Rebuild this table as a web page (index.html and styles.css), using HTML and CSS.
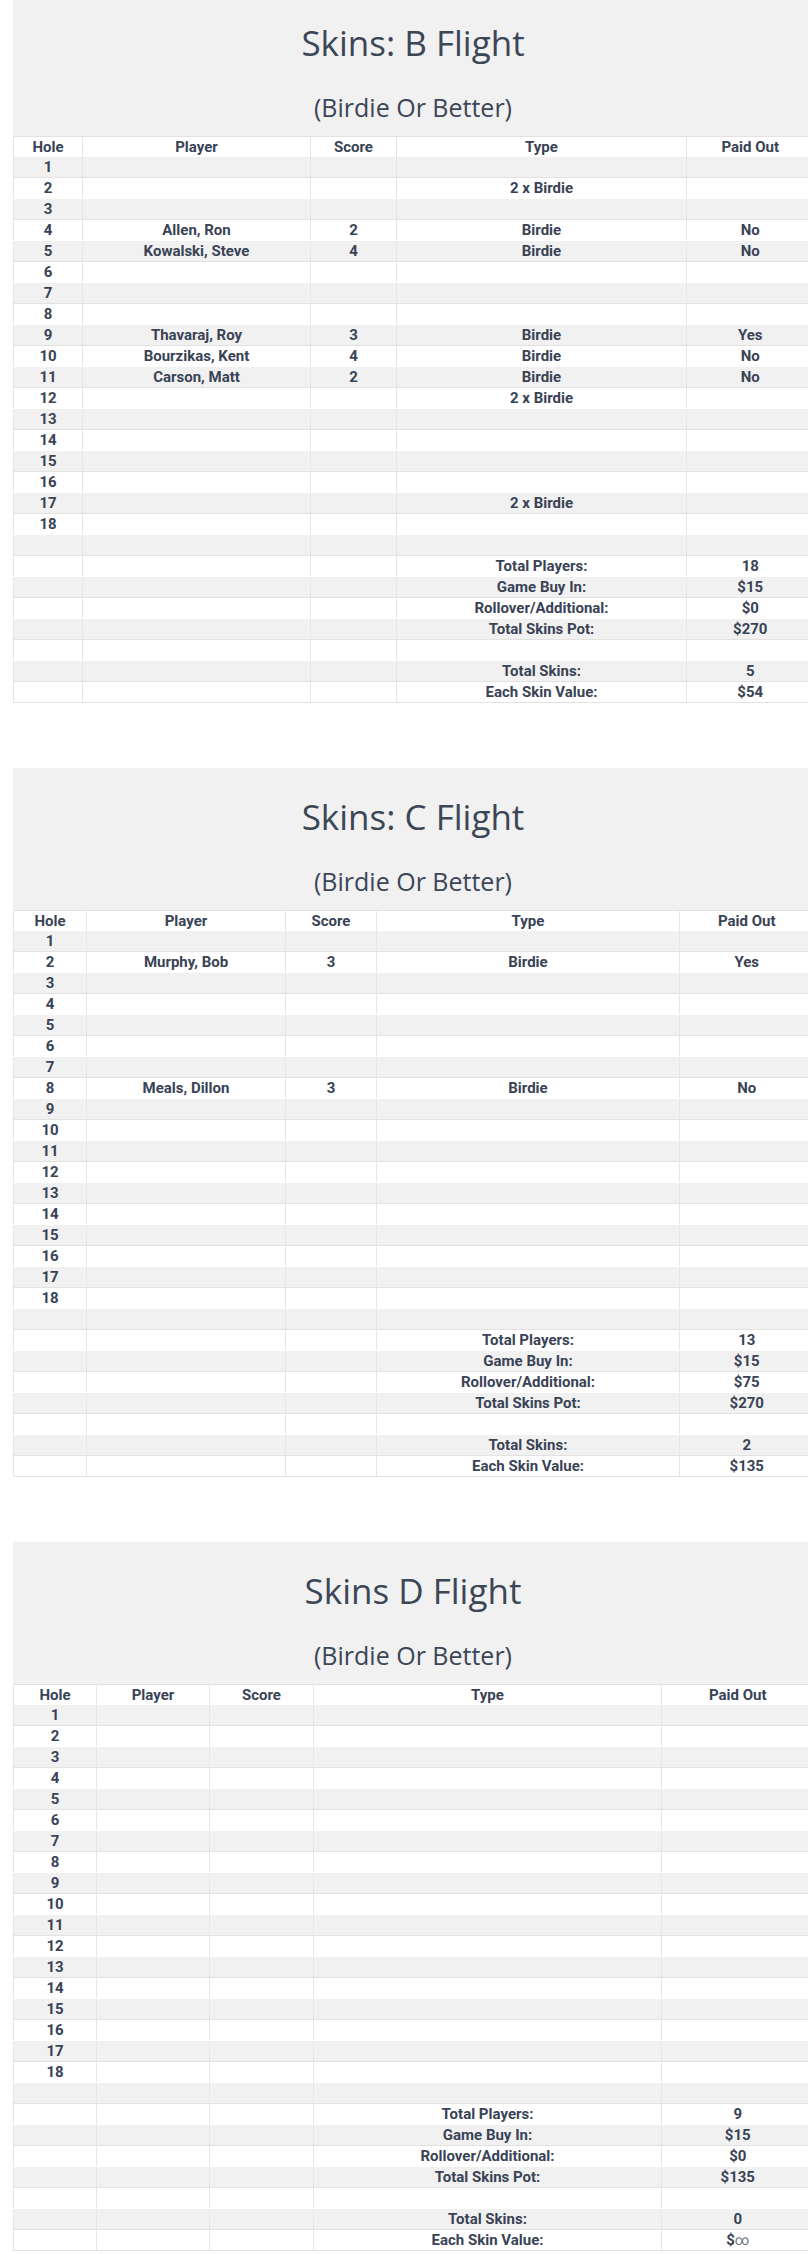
FILE: index.html
```html
<!DOCTYPE html>
<html lang="en">
<head>
    <meta charset="UTF-8">
    <meta name="viewport" content="width=device-width, initial-scale=1.0">
    <title>Skins Results</title>
    <link rel="stylesheet" href="styles.css">
</head>
<body>
    <main class="page">
        <section class="flight flight-b">
            <header class="flight-head">
                <h1>Skins: B Flight</h1>
                <h2>(Birdie Or Better)</h2>
            </header>
            <table class="skins">
                <colgroup>
                    <col class="c-hole"><col class="c-player"><col class="c-score"><col class="c-type"><col class="c-paid">
                </colgroup>
                <thead>
                    <tr><th>Hole</th><th>Player</th><th>Score</th><th>Type</th><th>Paid Out</th></tr>
                </thead>
                <tbody>
                    <tr><td>1</td><td></td><td></td><td></td><td></td></tr>
                    <tr><td>2</td><td></td><td></td><td>2 x Birdie</td><td></td></tr>
                    <tr><td>3</td><td></td><td></td><td></td><td></td></tr>
                    <tr><td>4</td><td>Allen, Ron</td><td>2</td><td>Birdie</td><td>No</td></tr>
                    <tr><td>5</td><td>Kowalski, Steve</td><td>4</td><td>Birdie</td><td>No</td></tr>
                    <tr><td>6</td><td></td><td></td><td></td><td></td></tr>
                    <tr><td>7</td><td></td><td></td><td></td><td></td></tr>
                    <tr><td>8</td><td></td><td></td><td></td><td></td></tr>
                    <tr><td>9</td><td>Thavaraj, Roy</td><td>3</td><td>Birdie</td><td>Yes</td></tr>
                    <tr><td>10</td><td>Bourzikas, Kent</td><td>4</td><td>Birdie</td><td>No</td></tr>
                    <tr><td>11</td><td>Carson, Matt</td><td>2</td><td>Birdie</td><td>No</td></tr>
                    <tr><td>12</td><td></td><td></td><td>2 x Birdie</td><td></td></tr>
                    <tr><td>13</td><td></td><td></td><td></td><td></td></tr>
                    <tr><td>14</td><td></td><td></td><td></td><td></td></tr>
                    <tr><td>15</td><td></td><td></td><td></td><td></td></tr>
                    <tr><td>16</td><td></td><td></td><td></td><td></td></tr>
                    <tr><td>17</td><td></td><td></td><td>2 x Birdie</td><td></td></tr>
                    <tr><td>18</td><td></td><td></td><td></td><td></td></tr>
                    <tr><td></td><td></td><td></td><td></td><td></td></tr>
                    <tr><td></td><td></td><td></td><td>Total Players:</td><td>18</td></tr>
                    <tr><td></td><td></td><td></td><td>Game Buy In:</td><td>$15</td></tr>
                    <tr><td></td><td></td><td></td><td>Rollover/Additional:</td><td>$0</td></tr>
                    <tr><td></td><td></td><td></td><td>Total Skins Pot:</td><td>$270</td></tr>
                    <tr><td></td><td></td><td></td><td></td><td></td></tr>
                    <tr><td></td><td></td><td></td><td>Total Skins:</td><td>5</td></tr>
                    <tr><td></td><td></td><td></td><td>Each Skin Value:</td><td>$54</td></tr>
                </tbody>
            </table>
        </section>

        <section class="flight flight-c">
            <header class="flight-head">
                <h1>Skins: C Flight</h1>
                <h2>(Birdie Or Better)</h2>
            </header>
            <table class="skins">
                <colgroup>
                    <col class="c-hole"><col class="c-player"><col class="c-score"><col class="c-type"><col class="c-paid">
                </colgroup>
                <thead>
                    <tr><th>Hole</th><th>Player</th><th>Score</th><th>Type</th><th>Paid Out</th></tr>
                </thead>
                <tbody>
                    <tr><td>1</td><td></td><td></td><td></td><td></td></tr>
                    <tr><td>2</td><td>Murphy, Bob</td><td>3</td><td>Birdie</td><td>Yes</td></tr>
                    <tr><td>3</td><td></td><td></td><td></td><td></td></tr>
                    <tr><td>4</td><td></td><td></td><td></td><td></td></tr>
                    <tr><td>5</td><td></td><td></td><td></td><td></td></tr>
                    <tr><td>6</td><td></td><td></td><td></td><td></td></tr>
                    <tr><td>7</td><td></td><td></td><td></td><td></td></tr>
                    <tr><td>8</td><td>Meals, Dillon</td><td>3</td><td>Birdie</td><td>No</td></tr>
                    <tr><td>9</td><td></td><td></td><td></td><td></td></tr>
                    <tr><td>10</td><td></td><td></td><td></td><td></td></tr>
                    <tr><td>11</td><td></td><td></td><td></td><td></td></tr>
                    <tr><td>12</td><td></td><td></td><td></td><td></td></tr>
                    <tr><td>13</td><td></td><td></td><td></td><td></td></tr>
                    <tr><td>14</td><td></td><td></td><td></td><td></td></tr>
                    <tr><td>15</td><td></td><td></td><td></td><td></td></tr>
                    <tr><td>16</td><td></td><td></td><td></td><td></td></tr>
                    <tr><td>17</td><td></td><td></td><td></td><td></td></tr>
                    <tr><td>18</td><td></td><td></td><td></td><td></td></tr>
                    <tr><td></td><td></td><td></td><td></td><td></td></tr>
                    <tr><td></td><td></td><td></td><td>Total Players:</td><td>13</td></tr>
                    <tr><td></td><td></td><td></td><td>Game Buy In:</td><td>$15</td></tr>
                    <tr><td></td><td></td><td></td><td>Rollover/Additional:</td><td>$75</td></tr>
                    <tr><td></td><td></td><td></td><td>Total Skins Pot:</td><td>$270</td></tr>
                    <tr><td></td><td></td><td></td><td></td><td></td></tr>
                    <tr><td></td><td></td><td></td><td>Total Skins:</td><td>2</td></tr>
                    <tr><td></td><td></td><td></td><td>Each Skin Value:</td><td>$135</td></tr>
                </tbody>
            </table>
        </section>

        <section class="flight flight-d">
            <header class="flight-head">
                <h1>Skins D Flight</h1>
                <h2>(Birdie Or Better)</h2>
            </header>
            <table class="skins">
                <colgroup>
                    <col class="c-hole"><col class="c-player"><col class="c-score"><col class="c-type"><col class="c-paid">
                </colgroup>
                <thead>
                    <tr><th>Hole</th><th>Player</th><th>Score</th><th>Type</th><th>Paid Out</th></tr>
                </thead>
                <tbody>
                    <tr><td>1</td><td></td><td></td><td></td><td></td></tr>
                    <tr><td>2</td><td></td><td></td><td></td><td></td></tr>
                    <tr><td>3</td><td></td><td></td><td></td><td></td></tr>
                    <tr><td>4</td><td></td><td></td><td></td><td></td></tr>
                    <tr><td>5</td><td></td><td></td><td></td><td></td></tr>
                    <tr><td>6</td><td></td><td></td><td></td><td></td></tr>
                    <tr><td>7</td><td></td><td></td><td></td><td></td></tr>
                    <tr><td>8</td><td></td><td></td><td></td><td></td></tr>
                    <tr><td>9</td><td></td><td></td><td></td><td></td></tr>
                    <tr><td>10</td><td></td><td></td><td></td><td></td></tr>
                    <tr><td>11</td><td></td><td></td><td></td><td></td></tr>
                    <tr><td>12</td><td></td><td></td><td></td><td></td></tr>
                    <tr><td>13</td><td></td><td></td><td></td><td></td></tr>
                    <tr><td>14</td><td></td><td></td><td></td><td></td></tr>
                    <tr><td>15</td><td></td><td></td><td></td><td></td></tr>
                    <tr><td>16</td><td></td><td></td><td></td><td></td></tr>
                    <tr><td>17</td><td></td><td></td><td></td><td></td></tr>
                    <tr><td>18</td><td></td><td></td><td></td><td></td></tr>
                    <tr><td></td><td></td><td></td><td></td><td></td></tr>
                    <tr><td></td><td></td><td></td><td>Total Players:</td><td>9</td></tr>
                    <tr><td></td><td></td><td></td><td>Game Buy In:</td><td>$15</td></tr>
                    <tr><td></td><td></td><td></td><td>Rollover/Additional:</td><td>$0</td></tr>
                    <tr><td></td><td></td><td></td><td>Total Skins Pot:</td><td>$135</td></tr>
                    <tr><td></td><td></td><td></td><td></td><td></td></tr>
                    <tr><td></td><td></td><td></td><td>Total Skins:</td><td>0</td></tr>
                    <tr><td></td><td></td><td></td><td>Each Skin Value:</td><td>$<span class="inf">&infin;</span></td></tr>
                </tbody>
            </table>
        </section>
    </main>
</body>
</html>
```

FILE: styles.css
```css
html, body {
    overflow-x: hidden;
}

body {
    margin: 0;
    padding: 0;
    background-color: #ffffff;
    color: #394355;
    font-family: Roboto, "Liberation Sans", Arial, sans-serif;
}

.page {
    width: 800px;
    margin-left: 13px;
}

.flight {
    margin-bottom: 65px;
}

.flight:first-child {
    margin-top: -6px;
}

.flight:last-child {
    margin-bottom: 0;
}

.flight-head {
    height: 142px;
    box-sizing: border-box;
    padding-top: 29px;
    background-color: #f1f1f1;
    text-align: center;
}

.flight-head h1 {
    margin: 0;
    font-family: "Open Sans", "Noto Sans", sans-serif;
    font-weight: 400;
    font-size: 35px;
    line-height: 40px;
    color: #3b4656;
}

.flight-head h2 {
    margin: 29px 0 0;
    font-family: "Open Sans", "Noto Sans", sans-serif;
    font-weight: 400;
    font-size: 25px;
    line-height: 30px;
    color: #3b4656;
}

.skins {
    width: 800px;
    table-layout: fixed;
    border-collapse: collapse;
    border-top: 1px solid #e2e2e2;
    border-bottom: 1px solid #e2e2e2;
    font-size: 15px;
    font-weight: 700;
    line-height: 20px;
}

.skins th,
.skins td {
    height: 20px;
    padding: 0;
    text-align: center;
    white-space: nowrap;
    border-left: 1px solid #e6e6e6;
}

.skins td {
    border-bottom: 1px solid #ffffff;
}

.skins tbody tr:nth-child(odd) td {
    background-color: #f1f1f1;
    border-bottom-color: #e2e2e2;
}

.skins tbody tr:last-child td {
    border-bottom: none;
}

.inf {
    font-weight: normal;
    font-size: 14px;
    color: #6a7280;
}

.flight-b .c-hole { width: 69px; }
.flight-b .c-player { width: 228px; }
.flight-b .c-score { width: 86px; }
.flight-b .c-type { width: 290px; }
.flight-b .c-paid { width: 127px; }

.flight-c .c-hole { width: 73px; }
.flight-c .c-player { width: 199px; }
.flight-c .c-score { width: 91px; }
.flight-c .c-type { width: 303px; }
.flight-c .c-paid { width: 134px; }

.flight-d .c-hole { width: 83px; }
.flight-d .c-player { width: 113px; }
.flight-d .c-score { width: 104px; }
.flight-d .c-type { width: 348px; }
.flight-d .c-paid { width: 152px; }
```
